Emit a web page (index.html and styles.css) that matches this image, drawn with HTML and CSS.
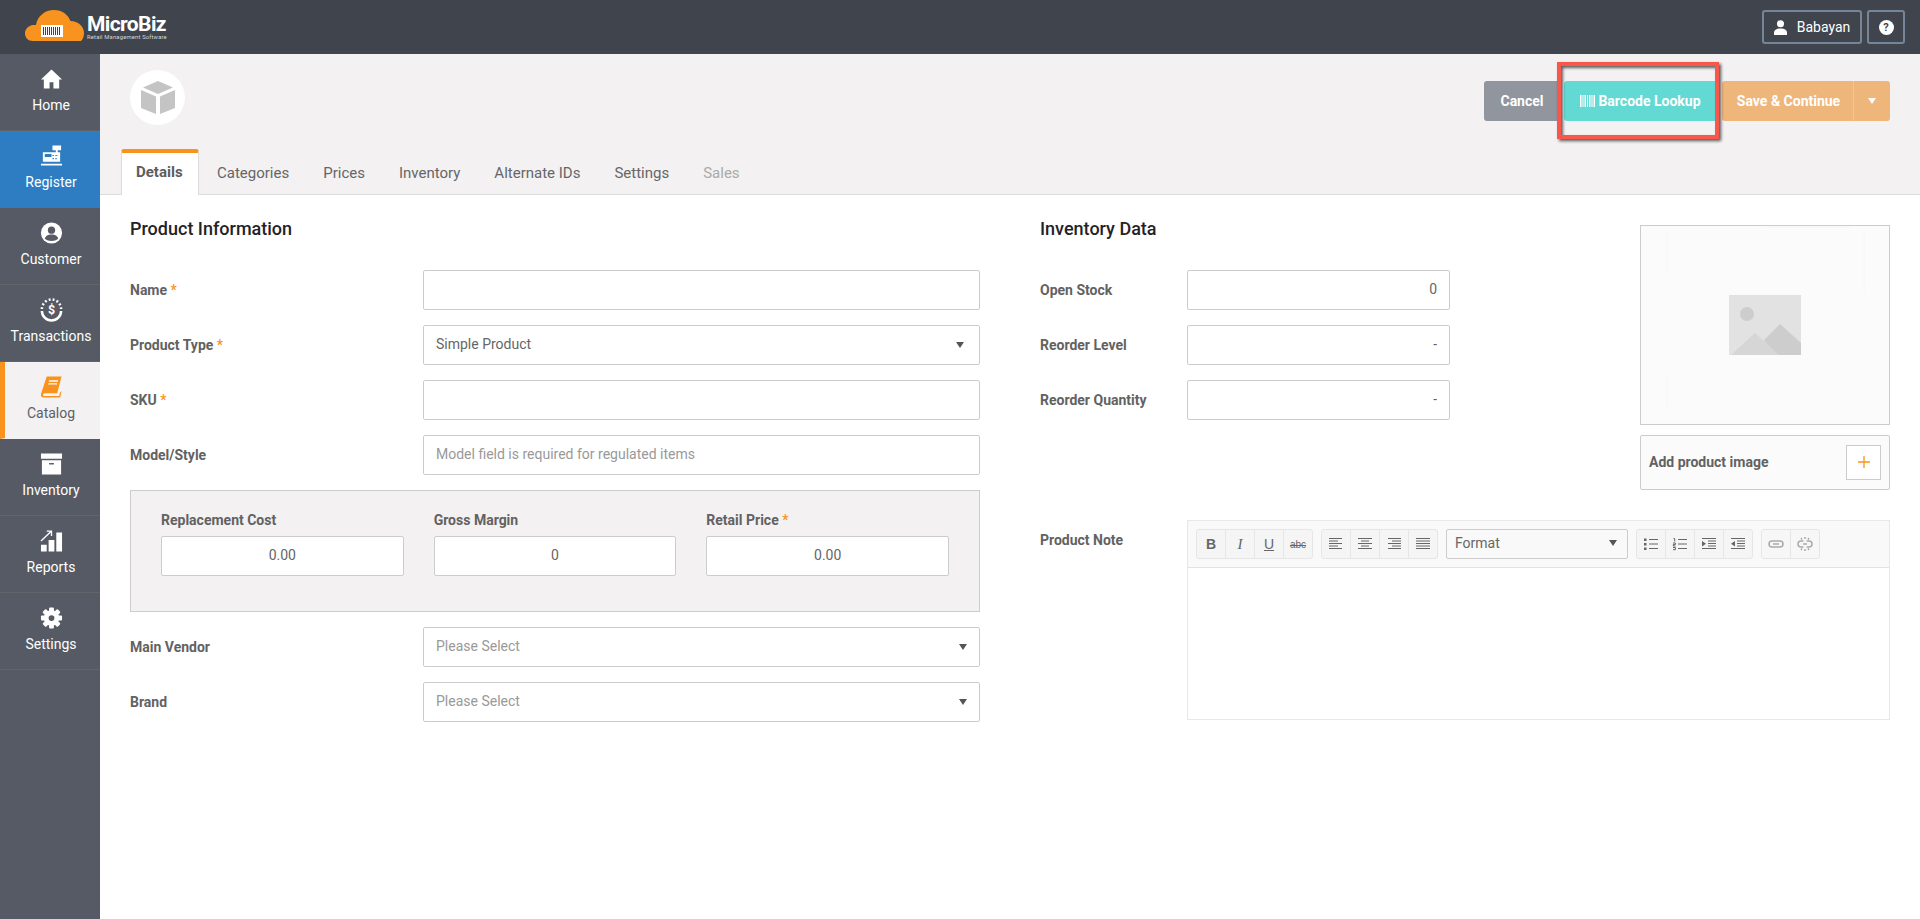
FILE: index.html
```html
<!DOCTYPE html>
<html lang="en">
<head>
<meta charset="utf-8">
<title>MicroBiz</title>
<link rel="stylesheet" href="styles.css">
</head>
<body>
<header class="topbar">
  <div class="logo">
    <svg class="logo-cloud" viewBox="0 0 60 32" width="60" height="32">
      <path fill="#f7931e" d="M8 31C3 31 0 27.500 0 23.500 0 19 3.500 15.500 8 15h3C12.500 6 20 0 29 0c8 0 14 4.500 16.500 11C53 11 59 16 59 23c0 3.500-1 6-3 8z"/>
      <rect x="16" y="15" width="22" height="12" fill="#fff"/>
      <path stroke="#444" stroke-width="8" fill="none" stroke-dasharray="1 1" d="M18 21h18"/>
    </svg>
    <div class="logo-text">
      <div class="logo-name">MicroBiz</div>
      <div class="logo-tag">Retail Management Software</div>
    </div>
  </div>
  <div class="top-actions">
    <div class="top-btn user-btn">
      <svg viewBox="0 0 14 16" width="13" height="15"><circle cx="7" cy="4" r="3.800" fill="#fff"/><path fill="#fff" d="M0 16v-2.500C0 10.500 3 9 7 9s7 1.500 7 4.500V16z"/></svg>
      <span>Babayan</span>
    </div>
    <div class="top-btn help-btn"><span class="help-mark">?</span></div>
  </div>
</header>

<div class="shell">
  <nav class="sidebar">
    <div class="nav-item">
      <svg class="nav-icon" viewBox="0 0 24 24"><path fill="#fff" d="M12 2 1 12.500h3V22h6v-6.500h4V22h6v-9.500h3z"/></svg>
      <span>Home</span>
    </div>
    <div class="nav-item nav-register">
      <svg class="nav-icon" viewBox="0 0 24 24">
        <path fill="#fff" d="M13 1h9v5h-3.500v2H21v10H3V8h13.500V6H13zM1 20h22v2H1z"/>
        <path fill="#2e7dc2" d="M5 10h7v3H5zM13 11h1.500v1H13zM16 11h1.500v1H16zM19 11h-.5v1H17zM13 14h1.500v1.500H13zM16 14h1.500v1.500H16z"/>
      </svg>
      <span>Register</span>
    </div>
    <div class="nav-item">
      <svg class="nav-icon" viewBox="0 0 24 24"><circle cx="12" cy="12" r="11" fill="#fff"/><circle cx="12" cy="9" r="3.800" fill="#555a64"/><path fill="#555a64" d="M5 18c.5-3 3.500-4.500 7-4.500s6.500 1.500 7 4.500c-2 1.500-4.500 2.300-7 2.300S7 19.500 5 18z"/></svg>
      <span>Customer</span>
    </div>
    <div class="nav-item">
      <svg class="nav-icon" viewBox="0 0 24 24">
        <path fill="none" stroke="#fff" stroke-width="2.600" d="M2 13a10 10 0 0 0 20 0"/>
        <path fill="none" stroke="#fff" stroke-width="2.600" stroke-dasharray="2 2.200" d="M2 11a10 10 0 0 1 20 0"/>
        <text x="12" y="16.500" class="dollar">$</text>
      </svg>
      <span>Transactions</span>
    </div>
    <div class="nav-item nav-active">
      <svg class="nav-icon" viewBox="0 0 24 24">
        <path fill="#f7931e" d="M7 1h15.500L18 18.500H5c-1.500 0-2 1.300-2 1.500s.5 1.500 2 1.500h15l1-4 1.500-1-1.500 6.500H4c-2.500 0-3.500-1.800-3-3.800z"/>
        <path fill="#fff" d="M9.500 5H19l-.4 1.500H9.100zM8.800 8H18l-.3 1.300H8.500z"/>
      </svg>
      <span>Catalog</span>
    </div>
    <div class="nav-item">
      <svg class="nav-icon" viewBox="0 0 24 24"><path fill="#fff" d="M1 1h22v5.500H1zM2 8h20v15H2z"/><path fill="#555a64" d="M9.500 11h5v1.500h-5z"/></svg>
      <span>Inventory</span>
    </div>
    <div class="nav-item">
      <svg class="nav-icon" viewBox="0 0 24 24"><path fill="#fff" d="M1 16h6v7H1zM9 11h6v12H9zM17 3h6v20h-6z"/><path fill="none" stroke="#fff" stroke-width="1.400" d="M1 12 11.500 2M7 1.700h5v5"/></svg>
      <span>Reports</span>
    </div>
    <div class="nav-item">
      <svg class="nav-icon" viewBox="0 0 24 24">
        <g fill="#fff">
          <rect x="9.500" y="1" width="5" height="22" rx="1"/>
          <rect x="9.500" y="1" width="5" height="22" rx="1" transform="rotate(45 12 12)"/>
          <rect x="9.500" y="1" width="5" height="22" rx="1" transform="rotate(90 12 12)"/>
          <rect x="9.500" y="1" width="5" height="22" rx="1" transform="rotate(135 12 12)"/>
          <circle cx="12" cy="12" r="8"/>
        </g>
        <circle cx="12" cy="12" r="3" fill="#555a64"/>
      </svg>
      <span>Settings</span>
    </div>
  </nav>

  <main class="content">
    <section class="head">
      <div class="head-row">
        <div class="product-badge">
          <svg viewBox="0 0 36 34" width="36" height="34">
            <path fill="#c4c4c4" d="M18 0l15 6.500-15 6.500-15-6.500zM1 9l15 6.500V33L1 27zM20 15.500 35 9v18l-15 6z"/>
          </svg>
        </div>
        <div class="actions">
          <button class="btn btn-cancel">Cancel</button>
          <button class="btn btn-barcode">
            <svg viewBox="0 0 15 12" width="15" height="12"><path fill="#fff" d="M0 0h1.500v12H0zM2.500 0h1v12h-1zM4.500 0h1.500v12H4.500zM7 0h1v12H7zM9 0h1.500v12H9zM11.500 0h1v12h-1zM13.500 0h1.500v12h-1.500z"/></svg>
            Barcode Lookup
          </button>
          <div class="save-group">
            <button class="btn btn-save">Save &amp; Continue</button>
            <button class="btn btn-caret"><i class="caret caret-white"></i></button>
          </div>
          <div class="callout"></div>
        </div>
      </div>
      <div class="tabs">
        <div class="tab tab-active">Details</div>
        <div class="tab">Categories</div>
        <div class="tab">Prices</div>
        <div class="tab">Inventory</div>
        <div class="tab">Alternate IDs</div>
        <div class="tab">Settings</div>
        <div class="tab tab-disabled">Sales</div>
      </div>
    </section>

    <section class="form">
      <div class="col-left">
        <h3 class="section-title">Product Information</h3>
        <div class="rows">
          <div class="row"><label class="label">Name <em>*</em></label><input class="field" type="text"></div>
          <div class="row"><label class="label">Product Type <em>*</em></label><div class="field select select-tight">Simple Product<i class="caret"></i></div></div>
          <div class="row"><label class="label">SKU <em>*</em></label><input class="field" type="text"></div>
          <div class="row"><label class="label">Model/Style</label><input class="field" type="text" placeholder="Model field is required for regulated items"></div>
          <div class="price-box">
            <div class="price-col"><label class="label">Replacement Cost</label><input class="field center" type="text" value="0.00"></div>
            <div class="price-col"><label class="label">Gross Margin</label><input class="field center" type="text" value="0"></div>
            <div class="price-col"><label class="label">Retail Price <em>*</em></label><input class="field center" type="text" value="0.00"></div>
          </div>
          <div class="row"><label class="label">Main Vendor</label><div class="field select muted">Please Select<i class="caret"></i></div></div>
          <div class="row"><label class="label">Brand</label><div class="field select muted">Please Select<i class="caret"></i></div></div>
        </div>
      </div>

      <div class="col-right">
        <div class="right-top">
          <div class="inv-data">
            <h3 class="section-title">Inventory Data</h3>
            <div class="rows">
              <div class="row row-inv"><label class="label">Open Stock</label><input class="field right" type="text" value="0"></div>
              <div class="row row-inv"><label class="label">Reorder Level</label><input class="field right" type="text" value="-"></div>
              <div class="row row-inv"><label class="label">Reorder Quantity</label><input class="field right" type="text" value="-"></div>
            </div>
          </div>
          <aside class="image-side">
            <div class="image-box">
              <svg class="image-ghost" viewBox="0 0 248 198" width="248" height="198">
                <path fill="none" stroke="#f6f6f6" d="M125 1h85M26 6v40M223 6v60M26 150v30"/>
              </svg>
              <svg viewBox="0 0 72 60" width="72" height="60">
                <rect width="72" height="60" fill="#e2e2e2"/>
                <circle cx="18" cy="19" r="7" fill="#cdcdcd"/>
                <path fill="#cdcdcd" d="M35 45 51 29l21 19v12H46z"/>
                <path fill="#d6d6d6" d="M2 60l24-22 24 22z"/>
              </svg>
            </div>
            <div class="add-image">
              <span class="label">Add product image</span>
              <div class="add-btn">
                <svg viewBox="0 0 12 12" width="12" height="12"><path stroke="#f7931e" stroke-width="1.300" fill="none" d="M6 0v12M0 6h12"/></svg>
              </div>
            </div>
          </aside>
        </div>

        <div class="note-row">
          <label class="label note-label">Product Note</label>
          <div class="editor">
            <div class="toolbar">
              <div class="tb-group">
                <div class="tb-btn tb-b">B</div>
                <div class="tb-btn tb-i">I</div>
                <div class="tb-btn tb-u">U</div>
                <div class="tb-btn tb-s">abc</div>
              </div>
              <div class="tb-group">
                <div class="tb-btn"><svg class="tb-icon" viewBox="0 0 14 12"><path d="M0 .5h13M0 3h9M0 5.500h13M0 8h9M0 10.500h13"/></svg></div>
                <div class="tb-btn"><svg class="tb-icon" viewBox="0 0 14 12"><path d="M0 .5h14M3 3h8M0 5.500h14M3 8h8M0 10.500h14"/></svg></div>
                <div class="tb-btn"><svg class="tb-icon" viewBox="0 0 14 12"><path d="M1 .5h13M5 3h9M1 5.500h13M5 8h9M1 10.500h13"/></svg></div>
                <div class="tb-btn"><svg class="tb-icon" viewBox="0 0 14 12"><path d="M0 .5h14M0 3h14M0 5.500h14M0 8h14M0 10.500h14"/></svg></div>
              </div>
              <div class="tb-select">Format<i class="caret"></i></div>
              <div class="tb-group">
                <div class="tb-btn"><svg class="tb-icon" viewBox="0 0 14 12"><path d="M5 1.500h9M5 6h9M5 10.500h9"/><path class="tb-fill" d="M0 .5h2.500V3H0zM0 5h2.500v2.500H0zM0 9.500h2.500V12H0z"/></svg></div>
                <div class="tb-btn"><svg class="tb-icon" viewBox="0 0 14 12"><path d="M5 1.500h9M5 6h9M5 10.500h9M.5 .5h1.200v3M0 5h2.400v1.500H.3V8h2.200M0 9.500h2.400v2.200H0"/></svg></div>
                <div class="tb-btn"><svg class="tb-icon" viewBox="0 0 14 12"><path d="M0 .5h14M6 3h8M6 5.500h8M6 8h8M0 10.500h14"/><path class="tb-fill" d="M0 3l4 2.700L0 8.400z"/></svg></div>
                <div class="tb-btn"><svg class="tb-icon" viewBox="0 0 14 12"><path d="M0 .5h14M6 3h8M6 5.500h8M6 8h8M0 10.500h14"/><path class="tb-fill" d="M4 3 0 5.700l4 2.700z"/></svg></div>
              </div>
              <div class="tb-group tb-links">
                <div class="tb-btn"><svg class="tb-icon tb-icon-soft" viewBox="0 0 16 14"><rect x="1" y="4" width="14" height="6" rx="3"/><path d="M5 7h6"/></svg></div>
                <div class="tb-btn"><svg class="tb-icon tb-icon-soft" viewBox="0 0 16 14"><path d="M6.500 4H4a3 3 0 0 0 0 6h2.500M9.500 4H12a3 3 0 0 1 0 6H9.500M8 0v2M8 12v2M4 1l1 1.500M12 1l-1 1.500M4 13l1-1.500M12 13l-1-1.500M6 7h4"/></svg></div>
              </div>
            </div>
            <div class="editor-body"></div>
          </div>
        </div>
      </div>
    </section>
  </main>
</div>
</body>
</html>
```

FILE: styles.css
```css
* { box-sizing: border-box; }
html, body { margin: 0; height: 100%; }
body {
  font-family: Roboto, "Liberation Sans", sans-serif;
  font-size: 14px;
  color: #5d5d5d;
  background: #fff;
  overflow: hidden;
  display: flex;
  flex-direction: column;
}

/* Top bar */
.topbar {
  height: 54px;
  flex: none;
  background: #40454d;
  display: flex;
  align-items: center;
  justify-content: space-between;
  padding: 0 15px 0 25px;
}
.logo { display: flex; align-items: flex-start; gap: 2px; height: 54px; padding-top: 10px; }
.logo-cloud { flex: none; }
.logo-text { color: #fff; padding-top: 4px; }
.logo-name { font-weight: 700; font-size: 21px; line-height: 20px; letter-spacing: -.6px; }
.logo-tag { font-size: 5.800px; line-height: 7px; letter-spacing: .2px; color: #d5d7da; white-space: nowrap; }
.top-actions { display: flex; gap: 5px; }
.top-btn {
  height: 34px;
  border: 2px solid #75869a;
  border-radius: 3px;
  display: flex;
  align-items: center;
  justify-content: center;
  color: #fff;
}
.user-btn { width: 100px; gap: 10px; }
.help-btn { width: 38px; }
.help-mark {
  width: 15px; height: 15px; border-radius: 50%;
  background: #fff; color: #40454d;
  font-size: 11px; font-weight: 700; line-height: 15px; text-align: center;
}

/* Shell */
.shell { flex: 1; display: flex; min-height: 0; }
.sidebar { width: 100px; flex: none; background: #555a64; }
.nav-item {
  height: 77px;
  display: flex;
  flex-direction: column;
  align-items: center;
  padding: 13px 0 0 2px;
  gap: 6px;
  color: #fff;
  border-bottom: 1px solid #62646a;
  line-height: 17px;
  font-size: 14px;
}
.nav-icon { width: 23px; height: 24px; flex: none; }
.nav-register { background: #2e7dc2; border-bottom-color: #2e7dc2; }
.nav-active { background: #f3f1f2; color: #5d6068; border-left: 5px solid #f7931e; border-bottom-color: #f3f1f2; padding: 13px 3px 0 0; }
.dollar { font: 700 13px Roboto, sans-serif; fill: #fff; text-anchor: middle; }

/* Content */
.content { flex: 1; min-width: 0; }
.head { height: 141px; background: #f3f1f2; border-bottom: 1px solid #dcdcdc; padding: 16px 30px 0; }
.head-row { display: flex; justify-content: space-between; align-items: flex-start; height: 79px; }
.product-badge {
  width: 55px; height: 55px; border-radius: 50%; background: #fff;
  display: flex; align-items: center; justify-content: center;
}
.actions { position: relative; display: flex; gap: 4px; margin-top: 11px; }
.btn {
  height: 40px; border: 0; border-radius: 3px; color: #fff;
  font: 700 14px Roboto, sans-serif; padding: 0 0 1px;
  display: flex; align-items: center; justify-content: center;
}
.btn-cancel { width: 76px; background: #91959d; }
.btn-barcode { width: 154px; background: #62d9d3; gap: 3px; padding-right: 1px; }
.save-group { display: flex; }
.btn-save { width: 132px; background: #efb67c; border-radius: 3px 0 0 3px; border-right: 1px solid #f3c596; padding-left: 2px; }
.btn-caret { width: 36px; background: #efb67c; border-radius: 0 3px 3px 0; }
.caret { display: inline-block; width: 0; height: 0; border-left: 4px solid transparent; border-right: 4px solid transparent; border-top: 6px solid #555; }
.caret-white { border-top-color: #fff; }
.callout {
  position: absolute;
  left: 73px; top: -19px; width: 162px; height: 77px;
  border: 4px solid #f9574c;
  box-shadow: 2px 2px 3px rgba(0, 0, 0, .65), inset 2px 2px 3px rgba(0, 0, 0, .6);
  pointer-events: none;
}

.tabs { display: flex; margin-left: -9px; height: 46px; }
.tab { padding: 3px 17px 0; line-height: 42px; font-size: 15px; color: #666; white-space: nowrap; }
.tab-active {
  padding: 0 0 0 14px;
  margin-right: 1px;
  line-height: 38px;
  height: 46px;
  background: #fff;
  color: #5d5d5d;
  font-weight: 700;
  border-top: 4px solid #f7931e;
  border-left: 1px solid #dcdcdc;
  border-right: 1px solid #dcdcdc;
  border-radius: 3px 3px 0 0;
  width: 78px;
}
.tab-disabled { color: #aaa; }

/* Form */
.form { display: flex; gap: 60px; padding: 20px 30px 0; }
.col-left { width: 850px; flex: none; }
.col-right { flex: 1; min-width: 0; }
.section-title { margin: 0 0 27px; font-size: 18px; font-weight: 500; line-height: 28px; color: #1f2328; }
.rows { display: flex; flex-direction: column; gap: 15px; }
.row { display: grid; grid-template-columns: 293px 557px; align-items: center; height: 40px; }
.row-inv { grid-template-columns: 147px 263px; }
.label { font-size: 14px; font-weight: 700; color: #626262; white-space: nowrap; }
.label em { color: #f7931e; font-style: normal; font-weight: 500; }
.field {
  height: 40px; width: 100%;
  border: 1px solid #ccc; border-radius: 2px; background: #fff;
  padding: 0 12px 2px; font: 14px Roboto, sans-serif; color: #666;
  outline: none;
}
.field::placeholder { color: #999; opacity: 1; }
.center { text-align: center; }
.right { text-align: right; padding-right: 12px; }
.select { display: flex; align-items: center; justify-content: space-between; padding: 0 12px 3px 12px; }
.select .caret { margin-top: 3px; }
.select-tight .caret { margin-right: 3px; }
.muted { color: #999; }
.price-box {
  height: 122px;
  background: #f3f1f2;
  border: 1px solid #ccc;
  padding: 20px 30px 0;
  display: grid;
  grid-template-columns: repeat(3, 1fr);
  column-gap: 30px;
}
.price-col .label { display: block; line-height: 18px; margin-bottom: 7px; }

/* Right column */
.right-top { display: flex; justify-content: space-between; height: 275px; }
.inv-data { width: 410px; }
.image-side { width: 250px; padding-top: 10px; }
.image-box {
  position: relative;
  height: 200px; border: 1px solid #ccc; background: #fbfbfb;
  display: flex; align-items: center; justify-content: center;
}
.image-ghost { position: absolute; left: 0; top: 0; }
.add-image {
  height: 55px; margin-top: 10px;
  border: 1px solid #ccc; border-radius: 2px; background: #fbfbfb;
  display: flex; align-items: center; justify-content: space-between;
  padding: 0 8px 1px;
}
.add-btn {
  width: 35px; height: 35px; border: 1px solid #ccc; background: #fff;
  display: flex; align-items: center; justify-content: center;
}

.note-row { display: grid; grid-template-columns: 147px 703px; margin-top: 30px; }
.note-label { padding-top: 12px; }
.editor { border: 1px solid #e8e8e8; height: 200px; display: flex; flex-direction: column; }
.toolbar {
  height: 47px; flex: none; background: #f9f9f9; border-bottom: 1px solid #e3e3e3;
  padding: 8px; display: flex; gap: 8px;
}
.tb-group { display: flex; height: 30px; border: 1px solid #e6e6e6; border-radius: 3px; background: #f5f5f5; }
.tb-btn {
  width: 29px; border-right: 1px solid #e6e6e6;
  display: flex; align-items: center; justify-content: center;
  font-family: "Liberation Sans", sans-serif; color: #666;
}
.tb-btn:last-child { width: 28px; border-right: 0; }
.tb-b { font-weight: 700; font-size: 14px; }
.tb-i { font-family: "Liberation Serif", serif; font-style: italic; font-size: 15px; }
.tb-u { text-decoration: underline; font-size: 14px; }
.tb-s { text-decoration: line-through; font-size: 10px; }
.tb-icon { width: 14px; height: 12px; fill: none; stroke: #666; stroke-width: 1; overflow: visible; }
.tb-fill { fill: #666; stroke: none; }
.tb-icon-soft { width: 16px; height: 14px; stroke: #aaa; stroke-width: 1.500; }
.tb-links { background: #f7f7f7; }
.tb-select {
  width: 182px; height: 30px; border: 1px solid #ccc; border-radius: 2px; background: #f9f9f9;
  display: flex; align-items: center; justify-content: space-between; padding: 0 10px 2px 8px;
  color: #666; font-size: 14px;
}
.editor-body { flex: 1; background: #fff; }
```
